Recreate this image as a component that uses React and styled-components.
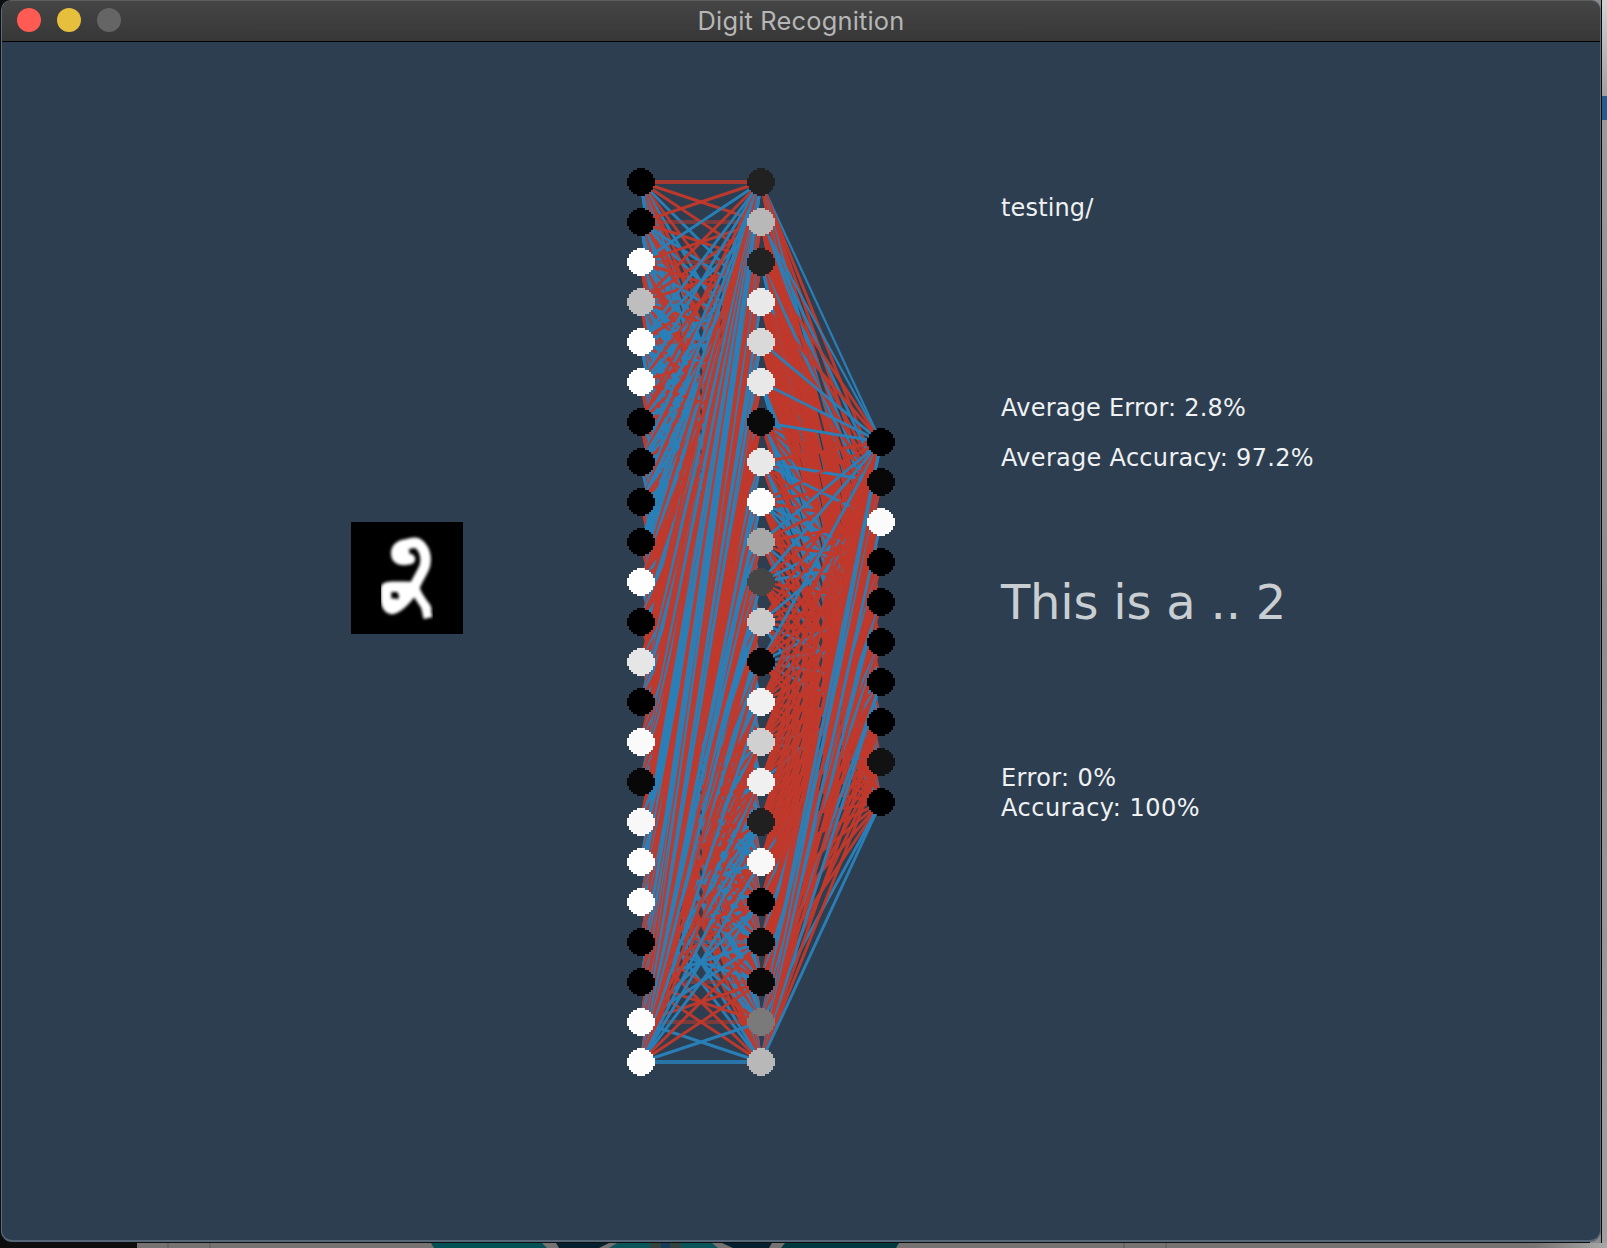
import React from "react";
import styled, { createGlobalStyle } from "styled-components";

const GlobalStyle = createGlobalStyle`
  body { margin: 0; overflow: hidden; background: #0b0c0e; }
  * { box-sizing: border-box; }
`;

const Desktop = styled.div`
  width: 1607px;
  height: 1248px;
  display: flex;
  flex-direction: column;
  background: #111;
`;

const MainRow = styled.div`
  display: flex;
  height: 1243px;
  padding-left: 1px;
  background: linear-gradient(90deg, #0d0e10 0 1590px, #8a8a8a 1590px);
`;

const Window = styled.div`
  width: 1600px;
  height: 1242px;
  display: flex;
  flex-direction: column;
  overflow: hidden;
  border: 1px solid #5c6c7b;
  border-top-color: #5d5d5d;
  border-bottom: 2px solid #566779;
  border-radius: 10px 10px 11px 11px;
  background: #2d3e50;
`;

const Backdrop = styled.div`
  flex: 1;
  display: flex;
  flex-direction: column;
  padding-top: 96px;
  border-left: 1px solid #080808;
  background: linear-gradient(180deg, #d4d4d4 0, #bdbdbd 40px, #9a9a9a 110px, #8c8c8c 600px, #a0a0a0 1243px);
`;

const BackdropMark = styled.div`
  height: 24px;
  background: #245a8c;
`;

const TitleBar = styled.div`
  height: 41px;
  flex: none;
  display: grid;
  grid-template-columns: 120px 1fr 120px;
  align-items: center;
  padding: 0 0 2px 15px;
  border-bottom: 1px solid #000;
  background: linear-gradient(180deg, #454545, #373737);
`;

const Lights = styled.div`
  display: flex;
  gap: 16px;
`;

const Light = styled.span`
  width: 24px;
  height: 24px;
  border-radius: 50%;
  background: ${(p) => p.$color};
`;

const Title = styled.div`
  text-align: center;
  padding: 1px 15px 0 0;
  font: 400 25.4px/36px Inter, sans-serif;
  letter-spacing: 0.2px;
  color: #b6b6b6;
`;

const Content = styled.div`
  flex: 1;
  display: flex;
  align-items: flex-start;
  padding-left: 349px;
`;

const DigitPanel = styled.div`
  width: 112px;
  height: 112px;
  margin: 480px 164px 0 0;
  background: #000;
`;

const Drawing = styled.svg`
  display: block;
`;

const NetworkPanel = styled.div`
  margin: 126px 106px 0 0;
`;

const Readout = styled.div`
  display: flex;
  flex-direction: column;
  padding-top: 151px;
  white-space: pre;
  font-family: "DejaVu Sans", sans-serif;
`;

const Line = styled.div`
  height: 30px;
  margin-bottom: ${(p) => p.$after || 0}px;
  font-size: 24px;
  line-height: 30px;
  letter-spacing: ${(p) => p.$track || 0}px;
  color: #eff1f3;
`;

const Verdict = styled.div`
  height: 60px;
  margin-bottom: 130px;
  font-size: 48px;
  line-height: 58px;
  letter-spacing: -0.2px;
  color: #c9ced2;
`;

const RED = "#c0392b";
const BLUE = "#2980b9";

const grey = (v) => `rgb(${v},${v},${v})`;

const LAYERS = [
  { x: 14, y: 14, values: [0, 0, 255, 190, 255, 255, 0, 0, 0, 0, 255, 0, 230, 0, 250, 8, 248, 255, 255, 0, 0, 253, 253] },
  { x: 134, y: 14, values: [33, 184, 34, 233, 217, 232, 10, 232, 253, 168, 69, 203, 6, 241, 208, 240, 32, 248, 0, 10, 9, 122, 184] },
  { x: 254, y: 274, values: [0, 8, 251, 0, 0, 0, 0, 0, 18, 0] },
];

const LINKS = [
  {
    toFirst: "RRBRBBRBBBRRRBRBRBBRBBB",
    fromFirst: "RRRBRBRRBRBRRBRBBRRBRBB",
    fromLast: "BRRBBRRBBRBRRBRRBBBRRBB",
    toLast: "RBRRBRRBRRBRRBRRRBBRRBB",
    red: 0.46,
  },
  {
    toFirst: "BBRRBBBRRBBRBRRRRRRRRBB",
    fromFirst: "BRRRBRRBRR",
    fromLast: "BRBRRRBRRB",
    toLast: "RRBRRBRRRRRBRRRRRRRRRBB",
    red: 0.78,
  },
];

const noise = (a, b, c) => {
  const n = Math.sin(a * 127.1 + b * 311.7 + c * 74.7) * 43758.5453;
  return n - Math.floor(n);
};

function linkSign(k, i, j, rows, cols) {
  const s = LINKS[k];
  if (j === 0) return s.toFirst[i];
  if (i === rows - 1) return s.fromLast[j];
  if (i === 0) return s.fromFirst[j];
  if (j === cols - 1) return s.toLast[i];
  if (k === 0 && i === 21 && j === 21) return "R";
  if (k === 1 && j <= 2 && i >= 12 && i <= 20) return "R";
  if (k === 1 && j >= 7 && i >= 17) return "R";
  return noise(i, j, k + 1) < s.red ? "R" : "B";
}

const links = [];
LAYERS.slice(0, 2).forEach((from, k) => {
  const to = LAYERS[k + 1];
  from.values.forEach((_, i) => {
    to.values.forEach((__, j) => {
      const flat = from.y + i * 40 === to.y + j * 40;
      const edge = i === 0 || i === 22;
      const rim = k === 1 && i < 2 && j === 0;
      links.push({
        id: `${k}-${i}-${j}`,
        x1: from.x,
        y1: from.y + i * 40,
        x2: to.x,
        y2: to.y + j * 40,
        color: linkSign(k, i, j, from.values.length, to.values.length) === "R" ? RED : BLUE,
        width: flat ? 4 : rim ? 2.2 : 2.9,
        opacity: flat ? (edge ? 0.83 : 0.5) : 0.97,
      });
    });
  });
});

const NODE_ROWS = [4, 8, 10, 12, 12, 14, 14, 14, 14, 12, 12, 10, 8, 4];
const nodePath = NODE_ROWS.map((w, r) => `M${-w} ${r * 2 - 14}h${w * 2}v2h${-w * 2}z`).join("");

function Network() {
  return (
    <Drawing width="268" height="908" viewBox="0 0 268 908">
      {links.map((l) => (
        <line key={l.id} x1={l.x1} y1={l.y1} x2={l.x2} y2={l.y2} stroke={l.color} strokeWidth={l.width} strokeOpacity={l.opacity} />
      ))}
      {LAYERS.map((layer) =>
        layer.values.map((v, i) => (
          <path
            key={`${layer.x}-${i}`}
            d={nodePath}
            transform={`translate(${layer.x} ${layer.y + i * 40})`}
            fill={grey(v)}
            shapeRendering="crispEdges"
          />
        ))
      )}
    </Drawing>
  );
}

function Digit() {
  return (
    <Drawing width="112" height="112" viewBox="0 0 112 112">
      <defs>
        <filter id="soft" x="-10%" y="-10%" width="120%" height="120%">
          <feGaussianBlur stdDeviation="1.5" />
        </filter>
      </defs>
      <g filter="url(#soft)" fill="none" stroke="#fff" strokeLinecap="round" strokeLinejoin="round">
        <path strokeWidth="10.5" d="M59 37C54 38 49 39 46 35C44 29 46 25 52 23C58 22 62 20 66 21C73 25 76 34 74 43C72 51 65 58 63 67C58 74 48 86 41 87C34 86 35 77 35 66C38 64 49 65 63 65" />
        <path strokeWidth="9" d="M49 30L54 30M51 70L60 70M52 76L58 72M38 81L44 81M64 66C66 74 73 81 76 87" />
        <path strokeWidth="9" strokeLinecap="butt" d="M74 82L77 96" />
      </g>
    </Drawing>
  );
}

function BottomStrip() {
  return (
    <Drawing width="1607" height="5" viewBox="0 0 1607 5">
      <defs>
        <linearGradient id="edge">
          <stop offset="0" stopColor="#757271" />
          <stop offset="0.95" stopColor="#757271" />
          <stop offset="1" stopColor="#a8a8a8" />
        </linearGradient>
      </defs>
      <rect width="137" height="5" fill="#0e0e0f" />
      <rect x="137" width="1470" height="5" fill="url(#edge)" />
      <path d="M168 0v5M210 0v5M1124 0v5M1166 0v5" stroke="#5b5959" />
      <path d="M431 0H542L547 5H434z" fill="#035154" />
      <path d="M556 0H609L599 5H559z" fill="#06202d" />
      <path d="M617 0H712L718 5H609z" fill="#0a5559" />
      <path d="M650 0H681V5H650z" fill="#34423e" />
      <path d="M661 0H670V5H661z" fill="#163a5c" />
      <path d="M722 0H772L769 5H733z" fill="#06202d" />
      <path d="M785 0H899L896 5H781z" fill="#02383f" />
    </Drawing>
  );
}

export default function App() {
  return (
    <>
      <GlobalStyle />
      <Desktop>
        <MainRow>
          <Window>
            <TitleBar>
              <Lights>
                <Light $color="#ff5b52" />
                <Light $color="#e6c03c" />
                <Light $color="#656565" />
              </Lights>
              <Title>Digit Recognition</Title>
            </TitleBar>
            <Content>
              <DigitPanel>
                <Digit />
              </DigitPanel>
              <NetworkPanel>
                <Network />
              </NetworkPanel>
              <Readout>
                <Line $after={170} $track={0.15}>testing/</Line>
                <Line $after={20} $track={0.22}>Average Error: 2.8%</Line>
                <Line $after={100} $track={0.3}>Average Accuracy: 97.2%</Line>
                <Verdict>This is a .. 2</Verdict>
                <Line $track={0.4}>Error: 0%</Line>
                <Line $track={0.5}>Accuracy: 100%</Line>
              </Readout>
            </Content>
          </Window>
          <Backdrop>
            <BackdropMark />
          </Backdrop>
        </MainRow>
        <BottomStrip />
      </Desktop>
    </>
  );
}
